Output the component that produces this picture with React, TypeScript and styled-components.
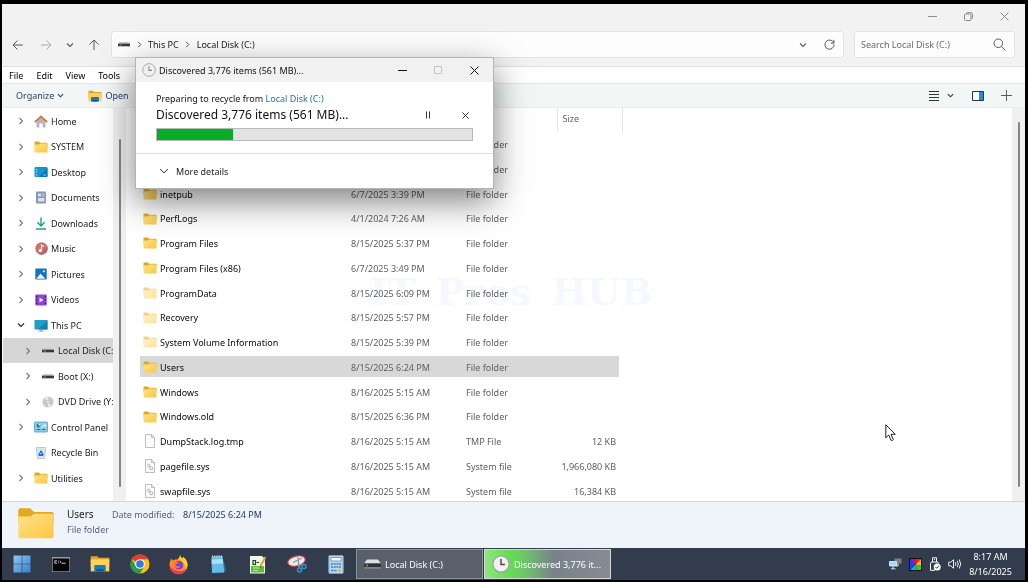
import React from "react";
import styled, { createGlobalStyle } from "styled-components";

const GlobalStyle = createGlobalStyle`
  *, *::before, *::after { box-sizing: border-box; }
  body {
    margin: 0;
    background: #000;
    font-family: "Noto Sans", "Open Sans", sans-serif;
    font-size: 9px;
    line-height: 15px;
    color: #1b1b1b;
  }
  button, input {
    font: inherit;
    color: inherit;
    background: none;
    border: 0;
    margin: 0;
    padding: 0;
    white-space: nowrap;
  }
  svg { display: block; flex: none; overflow: visible; }
`;

/* ---------- Shell ---------- */

const Desktop = styled.div`
  min-height: 100vh;
  padding: 4px 3px 2px 2px;
  display: flex;
  flex-direction: column;
  background: #000;
`;

const Explorer = styled.main`
  position: relative;
  flex: 1;
  display: flex;
  flex-direction: column;
  background: #fff;
`;

const IconButton = styled.button<{ $w?: number; $color?: string }>`
  width: ${(p) => p.$w ?? 28}px;
  height: 24px;
  flex: none;
  display: flex;
  align-items: center;
  justify-content: center;
  gap: 8px;
  color: ${(p) => p.$color ?? "#5a5a5a"};
`;

const Spacer = styled.div`
  flex: 1;
`;

/* ---------- Window chrome ---------- */

const Chrome = styled.header`
  background: #f2f2f2;
  border-bottom: 1px solid #e0e0e0;
  padding-bottom: 8px;
`;

const CaptionRow = styled.div`
  height: 27px;
  display: flex;
  justify-content: flex-end;
  padding-right: 2px;
`;

const NavRow = styled.div`
  display: flex;
  align-items: center;
  padding: 0 10px 0 2px;
`;

const AddressBar = styled.nav`
  flex: 1;
  height: 27px;
  display: flex;
  align-items: center;
  margin: 0 10px 0 3px;
  padding: 0 0 0 6px;
  background: #fdfdfd;
  border: 1px solid #e3e3e3;
  border-radius: 3px;
`;

const Crumb = styled.button`
  height: 24px;
`;

const CrumbGap = styled.span`
  width: 18px;
  display: flex;
  justify-content: center;
  color: #444;
`;

const SearchBox = styled.label`
  width: 161px;
  height: 27px;
  display: flex;
  align-items: center;
  padding: 0 8px 0 6px;
  background: #fdfdfd;
  border: 1px solid #e3e3e3;
  border-radius: 3px;
  color: #5c5c5c;
`;

const SearchInput = styled.input`
  flex: 1;
  min-width: 0;
  outline: 0;
  &::placeholder { color: #6a6a6a; opacity: 1; }
`;

const MenuBar = styled.nav`
  height: 16px;
  display: flex;
  align-items: center;
  gap: 13px;
  padding: 0 7px;
  color: #000;
`;

const CommandBar = styled.div`
  height: 25px;
  display: flex;
  align-items: center;
  padding: 0 5px 0 14px;
  background: #f3f6f7;
  border-top: 1px solid #e2e6e8;
  border-bottom: 1px solid #e9edef;
  color: #2a4168;
`;

const Command = styled.button`
  display: flex;
  align-items: center;
  gap: 3px;
  margin-right: 24px;
`;

/* ---------- Body ---------- */

const Body = styled.div`
  flex: 1 1 0;
  min-height: 0;
  display: flex;
  overflow: hidden;
`;

const Tree = styled.nav`
  width: 111px;
  flex: none;
  padding-left: 1px;
  overflow: hidden;
`;

const TreeItem = styled.button<{ $level?: number; $selected?: boolean }>`
  width: 100%;
  height: 26px;
  display: flex;
  align-items: center;
  padding-left: ${(p) => (p.$level ? 20 : 13)}px;
  background: ${(p) => (p.$selected ? "#d6d6d6" : "transparent")};
  overflow: hidden;
  &:nth-child(even) { height: 25px; }
`;

const TreeArrow = styled.span<{ $open?: boolean }>`
  width: 10px;
  flex: none;
  display: flex;
  justify-content: center;
  color: ${(p) => (p.$open ? "#222" : "#777")};
`;

const TreeIcon = styled.span`
  width: 14px;
  margin: 0 3px 0 8px;
  flex: none;
  display: flex;
  justify-content: center;
`;

const ScrollTrack = styled.div<{ $top: number }>`
  width: 13px;
  flex: none;
  display: flex;
  justify-content: center;
  padding: ${(p) => p.$top}px 0 14px;
  background: #f0f0f0;
`;

const ScrollThumb = styled.div`
  width: 2px;
  border-radius: 1px;
  background: #858585;
`;

const FilePane = styled.section`
  position: relative;
  flex: 1;
  min-width: 0;
  padding-left: 14px;
  overflow: hidden;
`;

const FileTable = styled.table`
  width: 482px;
  table-layout: fixed;
  border-collapse: collapse;
  color: #606060;
`;

const Head = styled.th<{ $w: number }>`
  width: ${(p) => p.$w}px;
  height: 24px;
  padding: 0 5px 3px;
  border-right: 1px solid #e5e5e5;
  text-align: left;
  font-weight: 400;
  color: #5a6470;
`;

const Row = styled.tr<{ $selected?: boolean }>`
  height: 25px;
  &:nth-child(4n) { height: 24px; }
  background: ${(p) =>
    p.$selected
      ? "linear-gradient(#d8d8d8, #d8d8d8) 0 1px / 479px 21px no-repeat"
      : "none"};
`;

const Cell = styled.td<{ $size?: boolean }>`
  padding: ${(p) => (p.$size ? "0 6px 1px 0" : "0 0 1px 5px")};
  text-align: ${(p) => (p.$size ? "right" : "left")};
  white-space: nowrap;
`;

const NameCell = styled.th`
  padding: 0 0 1px 3px;
  font-weight: 400;
  text-align: left;
  white-space: nowrap;
  color: #080808;
`;

const FileName = styled.span`
  display: flex;
  align-items: center;
  gap: 3px;
`;

const Watermark = styled.div`
  position: absolute;
  left: 244px;
  top: 160px;
  display: flex;
  gap: 20px;
  font-family: "DejaVu Serif", serif;
  font-size: 38px;
  font-weight: 700;
  line-height: 48px;
  color: #f7f7ff;
  mix-blend-mode: multiply;
  white-space: nowrap;
  pointer-events: none;
`;

const Details = styled.footer`
  height: 47px;
  display: flex;
  padding: 5px 15px;
  background: #eff3fa;
  border-top: 1px solid #c9d9e8;
  color: #56637a;
`;

const DetailsText = styled.div`
  display: grid;
  grid-template-columns: 45px 71px auto;
  align-content: start;
  margin-left: 12px;
  white-space: nowrap;
`;

const DetailsTitle = styled.span`
  font-size: 10px;
  color: #1b1b1b;
`;

const DetailsValue = styled.span`
  color: #243b5e;
`;

/* ---------- Progress dialog ---------- */

const Dialog = styled.section`
  position: absolute;
  left: 133px;
  top: 53px;
  width: 359px;
  background: #fff;
  border: 1px solid #b4b4b4;
  box-shadow: 0 12px 32px rgba(0, 0, 0, 0.5);
`;

const DialogTitle = styled.header`
  height: 24px;
  display: flex;
  align-items: center;
  padding-left: 6px;
  background: #f1f1f1;
  color: #111;
`;

const DialogName = styled.span`
  margin-left: 3px;
`;

const DialogBody = styled.div`
  padding: 9px 20px 12px;
  color: #111;
`;

const DialogStatus = styled.div`
  display: flex;
  align-items: center;
  gap: 21px;
  height: 18px;
  font-size: 12px;
  line-height: 18px;
`;

const DiskLink = styled.a`
  color: #2c6cb5;
  text-decoration: none;
`;

const Track = styled.div`
  height: 13px;
  margin-top: 4px;
  background: #e3e3e3;
  border: 1px solid #b9b9b9;
`;

const Fill = styled.div`
  height: 100%;
  background: #06ad25;
`;

const DialogFooter = styled.footer`
  height: 35px;
  display: flex;
  align-items: center;
  padding-left: 23px;
  border-top: 1px solid #dcdcdc;
`;

const MoreButton = styled.button`
  display: flex;
  align-items: center;
  gap: 7px;
`;

/* ---------- Taskbar ---------- */

const Taskbar = styled.nav`
  height: 32px;
  display: flex;
  align-items: center;
  background: #323c4c;
  color: #fff;
`;

const Launchers = styled.div`
  display: flex;
  width: 354px;
`;

const Launcher = styled.button`
  flex: 1;
  height: 32px;
  display: flex;
  align-items: center;
  justify-content: center;
`;

const TaskButton = styled.button<{ $busy?: boolean }>`
  width: 127px;
  height: 30px;
  margin-right: 1px;
  display: flex;
  align-items: center;
  gap: 4px;
  padding-left: 7px;
  color: #fff;
  border: 1px solid ${(p) => (p.$busy ? "#d3d8d3" : "#8b919a")};
  background: ${(p) =>
    p.$busy
      ? "linear-gradient(90deg, #8be77d 0, #66dc55 20%, #6cc968 30%, #78818a 55%, #878b94 100%)"
      : "#595f6b"};
`;

const Tray = styled.div`
  display: flex;
  align-items: center;
  gap: 7px;
  padding-right: 13px;
`;

const Clock = styled.time`
  width: 43px;
  text-align: center;
  white-space: nowrap;
`;

const Pointer = styled.svg`
  position: absolute;
  left: 883px;
  top: 420px;
`;

/* ---------- Icons ---------- */

type Dir = "right" | "down";
const Chevron = ({ dir = "right", size = 8, w = 1.1 }: { dir?: Dir; size?: number; w?: number }) => (
  <svg width={size} height={size} viewBox="0 0 8 8" fill="none" stroke="currentColor" strokeWidth={w}>
    <path d={dir === "right" ? "M2.5 1 5.5 4 2.5 7" : "M1 2.5 4 5.5 7 2.5"} />
  </svg>
);

const Arrow = ({ turn }: { turn: number }) => (
  <svg width="12" height="12" viewBox="0 0 12 12" fill="none" stroke="currentColor" strokeWidth="1">
    <path d="M11 6H1.500M5.500 1.500 1 6l4.500 4.500" transform={`rotate(${turn} 6 6)`} />
  </svg>
);

const Cross = ({ size = 9, w = 1 }: { size?: number; w?: number }) => (
  <svg width={size} height={size} viewBox="0 0 9 9" fill="none" stroke="currentColor" strokeWidth={w}>
    <path d="M.5.5l8 8M8.500.5l-8 8" />
  </svg>
);

const Minus = () => (
  <svg width="9" height="9" viewBox="0 0 9 9" stroke="currentColor"><path d="M0 4.500h9" /></svg>
);

const FolderIcon = ({ w = 14, pale = false }: { w?: number; pale?: boolean }) => (
  <svg width={w} height={(w * 12) / 14} viewBox="0 0 14 12">
    <defs>
      <linearGradient id="folderFront" x1="0" y1="0" x2="1" y2="1">
        <stop offset="0" stopColor="#ffe38f" />
        <stop offset="1" stopColor="#fcc73c" />
      </linearGradient>
    </defs>
    <g opacity={pale ? 0.5 : 1}>
      <path d="M.5 1.200Q.5.5 1.200.5h3.600l1.500 1.300h6.500q.7 0 .7.700V6H.5z" fill="#e2a921" />
      <path d="M.5 3.500h4.600l1.300-1h6.400q.7 0 .7.700v7.600q0 .7-.7.700H1.200q-.7 0-.7-.7z" fill="url(#folderFront)" />
    </g>
  </svg>
);

const OpenFolder = ({ w = 14 }: { w?: number }) => (
  <svg width={w} height={(w * 12) / 14} viewBox="0 0 14 12">
    <path d="M.5.800h4.500l1.200 1.200h7.300V8H.5z" fill="#e0a526" />
    <path d="M.5 3h13v8.500H.5z" fill="#fdd25c" />
    <path d="M3 8q0-1 1-1h6q1 0 1 1v3.500H3z" fill="#1c79bd" />
    <path d="M4.500 10h5v1.500h-5z" fill="#11517f" />
  </svg>
);

const DriveIcon = ({ w = 12 }: { w?: number }) => (
  <svg width={w} height="5" viewBox="0 0 12 5">
    <path d="M1.500 0h9L12 2H0z" fill="#c6c8ca" />
    <path d="M0 1.700h12v2.600H0z" fill="#35393b" />
    <path d="M1.500 2.600h2.500v.9H1.500z" fill="#4dbb63" />
  </svg>
);

const FileIcon = ({ gears = false }: { gears?: boolean }) => (
  <svg width="14" height="14" viewBox="0 0 14 14" fill="none">
    <path d="M2.500.5h6l3 3v10h-9z" fill="#fbfbfb" stroke="#adadad" strokeWidth=".8" />
    <path d="M8.500.5v3h3" stroke="#adadad" strokeWidth=".8" />
    {gears && (
      <g stroke="#a3a7ab" strokeWidth=".9">
        <circle cx="5.800" cy="6.500" r="1.300" />
        <circle cx="8.300" cy="9.300" r="1.500" />
      </g>
    )}
  </svg>
);

const ClockIcon = ({ size = 14, hand = "#8a8a8a" }: { size?: number; hand?: string }) => (
  <svg width={size} height={size} viewBox="0 0 14 14">
    <circle cx="7" cy="7" r="6.300" fill="#f0f0f0" stroke="#a0a0a0" strokeWidth=".9" />
    <path d="M7 3.200V7.400H10" fill="none" stroke={hand} strokeWidth="1.100" />
  </svg>
);

const HomeIcon = () => (
  <svg width="14" height="13" viewBox="0 0 14 13">
    <path d="M2.500 6 7 2l4.500 4v6.500H8.600V8.500H5.400v4H2.500z" fill="#b4b8bd" />
    <path d="M.8 7.200 7 1.300l6.200 5.900" fill="none" stroke="#d1743a" strokeWidth="1.700" />
  </svg>
);

const DesktopIcon = () => (
  <svg width="14" height="12" viewBox="0 0 14 12">
    <rect x=".5" y="1" width="13" height="10" rx="1" fill="#1795d2" />
    <path d="M13.500 2v8q0 1-1 1H5z" fill="#0b76b8" />
    <path d="M2 3h1.200v1.200H2zM2 5.500h1.200v1.200H2zM2 8.500h1.200v1H2zM9.500 8.500h2v1h-2z" fill="#a9e6fa" />
  </svg>
);

const DocumentsIcon = () => (
  <svg width="12" height="13" viewBox="0 0 12 13">
    <rect x="1" y=".5" width="10" height="12" rx="1" fill="#8299b5" />
    <path d="M3 2.500h3v3H3zM7 2.500h2.500v1H7zM7 4.500h2.500v1H7zM3 7h6.500v3.500H3z" fill="#d6e1ee" />
  </svg>
);

const DownloadsIcon = () => (
  <svg width="12" height="13" viewBox="0 0 12 13" fill="none" stroke="#1fa283" strokeWidth="1.400">
    <path d="M6 .5v8.500M2.300 5.300 6 9l3.700-3.700M1 12h10" />
  </svg>
);

const MusicIcon = () => (
  <svg width="13" height="13" viewBox="0 0 13 13">
    <circle cx="6.500" cy="6.500" r="6.200" fill="#c9716a" />
    <path d="M12.300 4.300A6.200 6.200 0 0 1 4 12.200z" fill="#a85c8c" opacity=".6" />
    <circle cx="5.300" cy="8.600" r="1.600" fill="#fff" />
    <path d="M6.500 8.600V3L9 4.400" fill="none" stroke="#fff" strokeWidth="1.100" />
  </svg>
);

const PicturesIcon = () => (
  <svg width="12" height="12" viewBox="0 0 12 12">
    <rect x=".3" y=".5" width="11.400" height="11" rx="1" fill="#1273c1" />
    <path d="M1.300 10.800 5.500 5.500l4.800 5.300z" fill="#e8f5fd" />
    <circle cx="8.800" cy="3.300" r="1.100" fill="#fff" />
  </svg>
);

const VideosIcon = () => (
  <svg width="12" height="12" viewBox="0 0 12 12">
    <rect x=".3" y=".5" width="11.400" height="11" rx="1" fill="#8a45d4" />
    <path d="M1 2h1.300v1.300H1zM1 5.300h1.300v1.300H1zM1 8.700h1.300V10H1zM9.700 2H11v1.300H9.700zM9.700 5.300H11v1.300H9.700zM9.700 8.700H11V10H9.700z" fill="#3d1473" />
    <path d="M4.500 3.500v5L8.500 6z" fill="#f3e8ff" />
  </svg>
);

const MonitorIcon = () => (
  <svg width="14" height="13" viewBox="0 0 14 13">
    <rect x=".5" y="1" width="13" height="9.500" rx=".6" fill="#1f9fc6" />
    <path d="M13.500 1.500v9H4z" fill="#1384b0" />
    <path d="M6 10.500h2v1.200h2v.8H4v-.8h2z" fill="#8ea3ae" />
  </svg>
);

const DiscIcon = () => (
  <svg width="12" height="12" viewBox="0 0 12 12">
    <circle cx="6" cy="6" r="5.600" fill="#c9c9c9" />
    <path d="M6 6 2 2a5.600 5.600 0 0 1 4-1.600zM6 6l4 4a5.600 5.600 0 0 1-4 1.600z" fill="#e6e6e6" />
    <circle cx="6" cy="6" r="1.500" fill="#fff" stroke="#a5a5a5" strokeWidth=".6" />
  </svg>
);

const ControlIcon = () => (
  <svg width="14" height="12" viewBox="0 0 14 12">
    <rect x=".5" y="1" width="13" height="10" rx=".6" fill="#8ccdea" stroke="#4e9fca" strokeWidth=".8" />
    <circle cx="4.500" cy="4.500" r="1.900" fill="#1b6eb0" />
    <path d="M4.500 4.500V2.600a1.900 1.900 0 0 1 1.900 1.900z" fill="#fff" />
    <path d="M2.500 8.500h4M8 8.500h3.500" stroke="#1b6eb0" />
    <path d="M8 6.500 9.500 4l2 1.500V3" fill="none" stroke="#fff" />
  </svg>
);

const BinIcon = () => (
  <svg width="12" height="13" viewBox="0 0 12 13">
    <path d="M1.200 1.500h9.600l-1.200 11H2.400z" fill="#dde6ec" stroke="#a8b8c4" strokeWidth=".7" />
    <path d="M4 8.500 6 5l2 3.500zM3.700 9.500h4.600" fill="none" stroke="#1c78c9" strokeWidth="1.200" />
  </svg>
);

const StartIcon = () => (
  <svg width="18" height="18" viewBox="0 0 18 18">
    <defs>
      <linearGradient id="start" x1="0" y1="0" x2="1" y2="1">
        <stop offset="0" stopColor="#8fc8f3" />
        <stop offset="1" stopColor="#3480cc" />
      </linearGradient>
    </defs>
    <path d="M.5.500h8.200v8.200H.5zM9.300.500h8.200v8.200H9.300zM.5 9.300h8.200v8.200H.5zM9.300 9.300h8.200v8.200H9.300z" fill="url(#start)" />
  </svg>
);

const TerminalIcon = () => (
  <svg width="18" height="15" viewBox="0 0 18 15">
    <rect width="18" height="15" fill="#9a9a9a" />
    <rect x=".7" y="1.500" width="16.600" height="12.800" fill="#060606" />
    <path d="M5 3.800H2.800v2.400H5M6.500 3.800v.8M6.500 5.500v.8M8 3.800l1.300 2.500M10 6.300h3.500" fill="none" stroke="#ddd" strokeWidth=".9" />
  </svg>
);

const ChromeIcon = () => (
  <svg width="20" height="20" viewBox="0 0 20 20">
    <circle cx="10" cy="10" r="9.500" fill="#fbc116" />
    <path d="M10 10 1.800 5.200A9.500 9.500 0 0 1 18.200 5.200H10z" fill="#e33b2e" />
    <path d="M1.800 5.200A9.500 9.500 0 0 0 10 19.500l4.200-7.100-8.400.2z" fill="#2a9d4a" />
    <circle cx="10" cy="10" r="4.800" fill="#fff" />
    <circle cx="10" cy="10" r="3.800" fill="#2f77e6" />
  </svg>
);

const FirefoxIcon = () => (
  <svg width="19" height="19" viewBox="0 0 19 19">
    <path d="M11 .3c1 1.200 1.500 2.300 1.700 3.500 1-.7 1.500-1.300 1.700-1.800C17 4 18.600 7 18.500 10a9 9 0 0 1-18 .3C.5 7.500 1.300 5 2.700 3.200c.1 1 .4 1.700.9 2.300 1.200-.9 2.500-1 3.900-.8C9 3.700 10.700 2.500 11 .3z" fill="#ff8a1f" />
    <path d="M11 .3c1 1.200 1.500 2.300 1.700 3.500 1-.7 1.500-1.300 1.700-1.800C17 4 18.600 7 18.500 10c-.2 2.300-1.200 4.300-2.500 5.700 1-5-1-8.700-6-11.200C10.500 3.300 11 2 11 .3z" fill="#ffd034" />
    <path d="M.5 10.300C1 15.500 5 19 9.500 19c4 0 7-2.500 8.300-5.500C14 17 5 18 .5 10.300z" fill="#f2335d" />
    <circle cx="9.800" cy="10.300" r="4.300" fill="#7a3fd0" />
    <path d="M4.500 7c2-1 4 0 5.300.8-1 1-2.500.8-3 2 .8 2 3.500 2 5 1-1 3-5.500 3.500-7 0z" fill="#ff7139" />
  </svg>
);

const NotepadIcon = () => (
  <svg width="17" height="19" viewBox="0 0 17 19">
    <path d="M12.500 3 16.500 15 13 18z" fill="#2b6f96" />
    <path d="M1.500 1.800 12.500 1l1.800 16.500L2 18z" fill="#63bde8" />
    <path d="M1.600 4.500 12.800 4l.4 4.500-11.500.5z" fill="#a8e0f8" />
    <path d="M2 1.500h10.500" stroke="#d5dadd" strokeWidth="2" strokeDasharray="1 .8" />
  </svg>
);

const NotepadPlusIcon = () => (
  <svg width="18" height="19" viewBox="0 0 18 19">
    <path d="M1 1h12l3 3v14.500H1z" fill="#f1f6ec" />
    <path d="M2 11h13v6.500H2z" fill="#5cbd3f" />
    <path d="M4 5.500h2.500v4H4zM7.500 7.500h2.500" fill="none" stroke="#23421c" strokeWidth="1.200" />
    <path d="M4 13h7M4 15.500h5" stroke="#b8eba6" />
    <path d="M16.500 2 11 12" stroke="#dba52b" strokeWidth="2" />
    <path d="m11.300 11.300-.7 2.200 1.800-1.500z" fill="#333" />
  </svg>
);

const SnipIcon = () => (
  <svg width="20" height="18" viewBox="0 0 20 18">
    <ellipse cx="9.500" cy="6" rx="9" ry="5" fill="#e9ecee" stroke="#c23a40" strokeWidth="1.200" transform="rotate(-14 9.500 6)" />
    <path d="M6 7.500 15 3M11 2l1 11M12 11l5-2" stroke="#8e969c" strokeWidth="1.300" />
    <circle cx="12.500" cy="15" r="2" fill="none" stroke="#3690d4" strokeWidth="1.500" />
    <circle cx="17" cy="11.500" r="2" fill="none" stroke="#3690d4" strokeWidth="1.500" />
  </svg>
);

const CalculatorIcon = () => (
  <svg width="16" height="19" viewBox="0 0 16 19">
    <rect x=".8" y=".5" width="14.400" height="18" rx="1" fill="#b9d8ee" stroke="#6fa4cb" />
    <path d="M2.800 2.500h10.400v3.500H2.800z" fill="#f4fbff" stroke="#5b93be" strokeWidth=".8" />
    <path d="M3 9h10M3 12h10M3 15.500h6" stroke="#3d7fb5" strokeWidth="1.700" strokeDasharray="2 .7" />
    <path d="M10.500 14.600h2.300v2h-2.300z" fill="#e8a33a" />
  </svg>
);

const BigDrive = () => (
  <svg width="17" height="10" viewBox="0 0 17 10">
    <path d="M3 .5h11L17 4.500H0z" fill="#dcdedf" />
    <path d="M0 4.500h17v4H0z" fill="#2e3234" />
    <path d="M0 8.500h17v.8H0z" fill="#b7babc" />
    <circle cx="3" cy="6.500" r=".9" fill="#52d65a" />
  </svg>
);

const NetworkIcon = () => (
  <svg width="13" height="12" viewBox="0 0 13 12">
    <path d="M5.500.5h7v5h-7z" fill="#7b8188" />
    <path d="M.5 3.500h7v4.500h-7z" fill="#9fdcf7" stroke="#e7f5fb" strokeWidth=".8" />
    <path d="M4 8v2.500M2 10.800h4.500M9 5.500v2.500H7.500" fill="none" stroke="#dfe7ec" />
  </svg>
);

const ColorIcon = () => (
  <svg width="13" height="13" viewBox="0 0 13 13">
    <rect width="13" height="13" fill="#111" />
    <path d="M1 1h5.500v5.500z" fill="#b8188f" />
    <path d="M6.500 1H12L6.500 6.500z" fill="#f2241b" />
    <path d="M12 1v7L6.500 6.500z" fill="#ffb400" />
    <path d="M12 8v4H8L6.500 6.500z" fill="#35c92c" />
    <path d="M8 12H1l5.500-5.500z" fill="#12b8b8" />
    <path d="M1 12V1l5.500 5.500z" fill="#2a3df0" />
  </svg>
);

const UsbIcon = () => (
  <svg width="12" height="14" viewBox="0 0 12 14" fill="none" stroke="#fff">
    <path d="M3.500 5V.8h4V5M5 2.500h1M6 13.300H1.500V7q0-2 1.500-2h5q1.500 0 1.500 1.500" />
    <circle cx="8.200" cy="10" r="3.500" fill="#fff" stroke="none" />
    <path d="m6.500 10 1.300 1.300L10 8.800" stroke="#323c4c" />
  </svg>
);

const SpeakerIcon = () => (
  <svg width="14" height="12" viewBox="0 0 14 12" fill="none" stroke="#fff" strokeWidth=".9">
    <path d="M.7 4.200h2L5.500 1.700v8.600L2.700 7.800h-2zM7.300 4.200q1.200 1.800 0 3.600M9.200 2.800q2.200 3.200 0 6.400M11.200 1.500q3 4.500 0 9" />
  </svg>
);

/* ---------- Data ---------- */

type Node = { label: string; icon: React.ReactNode; arrow?: Dir | "none"; level?: number; selected?: boolean };

const tree: Node[] = [
  { label: "Home", icon: <HomeIcon /> },
  { label: "SYSTEM", icon: <FolderIcon /> },
  { label: "Desktop", icon: <DesktopIcon /> },
  { label: "Documents", icon: <DocumentsIcon /> },
  { label: "Downloads", icon: <DownloadsIcon /> },
  { label: "Music", icon: <MusicIcon /> },
  { label: "Pictures", icon: <PicturesIcon /> },
  { label: "Videos", icon: <VideosIcon /> },
  { label: "This PC", icon: <MonitorIcon />, arrow: "down" },
  { label: "Local Disk (C:)", icon: <DriveIcon />, level: 1, selected: true },
  { label: "Boot (X:)", icon: <DriveIcon />, level: 1 },
  { label: "DVD Drive (Y:)", icon: <DiscIcon />, level: 1 },
  { label: "Control Panel", icon: <ControlIcon /> },
  { label: "Recycle Bin", icon: <BinIcon />, arrow: "none" },
  { label: "Utilities", icon: <FolderIcon /> },
];

type Kind = "folder" | "hidden" | "file" | "system";
type Entry = [name: string, date: string, type: string, size: string, kind: Kind];

const entries: Entry[] = [
  ["", "", "File folder", "", "folder"],
  ["", "", "File folder", "", "folder"],
  ["inetpub", "6/7/2025 3:39 PM", "File folder", "", "folder"],
  ["PerfLogs", "4/1/2024 7:26 AM", "File folder", "", "folder"],
  ["Program Files", "8/15/2025 5:37 PM", "File folder", "", "folder"],
  ["Program Files (x86)", "6/7/2025 3:49 PM", "File folder", "", "folder"],
  ["ProgramData", "8/15/2025 6:09 PM", "File folder", "", "hidden"],
  ["Recovery", "8/15/2025 5:57 PM", "File folder", "", "hidden"],
  ["System Volume Information", "8/15/2025 5:39 PM", "File folder", "", "hidden"],
  ["Users", "8/15/2025 6:24 PM", "File folder", "", "folder"],
  ["Windows", "8/16/2025 5:15 AM", "File folder", "", "folder"],
  ["Windows.old", "8/15/2025 6:36 PM", "File folder", "", "folder"],
  ["DumpStack.log.tmp", "8/16/2025 5:15 AM", "TMP File", "12 KB", "file"],
  ["pagefile.sys", "8/16/2025 5:15 AM", "System file", "1,966,080 KB", "system"],
  ["swapfile.sys", "8/16/2025 5:15 AM", "System file", "16,384 KB", "system"],
];

const launchers: [string, React.ReactNode][] = [
  ["Start", <StartIcon />],
  ["Command Prompt", <TerminalIcon />],
  ["File Explorer", <OpenFolder w={20} />],
  ["Chrome", <ChromeIcon />],
  ["Firefox", <FirefoxIcon />],
  ["Notepad", <NotepadIcon />],
  ["Notepad++", <NotepadPlusIcon />],
  ["Snipping Tool", <SnipIcon />],
  ["Calculator", <CalculatorIcon />],
];

const progress = 24;

/* ---------- Parts ---------- */

const EntryIcon = ({ kind }: { kind: Kind }) =>
  kind === "folder" || kind === "hidden" ? (
    <FolderIcon pale={kind === "hidden"} />
  ) : (
    <FileIcon gears={kind === "system"} />
  );

const ProgressDialog = () => (
  <Dialog role="dialog" aria-label="Recycle progress">
    <DialogTitle>
      <ClockIcon />
      <DialogName>Discovered 3,776 items (561 MB)...</DialogName>
      <Spacer />
      <IconButton $w={36} $color="#111" aria-label="Minimize"><Minus /></IconButton>
      <IconButton $w={36} $color="#c4c4c4" aria-label="Maximize" disabled>
        <svg width="8" height="8" viewBox="0 0 8 8" fill="none" stroke="currentColor"><path d="M.5.500h7v7h-7z" /></svg>
      </IconButton>
      <IconButton $w={37} $color="#111" aria-label="Close"><Cross /></IconButton>
    </DialogTitle>
    <DialogBody>
      <div>Preparing to recycle from <DiskLink href="#">Local Disk (C:)</DiskLink></div>
      <DialogStatus>
        Discovered 3,776 items (561 MB)...
        <Spacer />
        <IconButton $w={16} $color="#333" aria-label="Pause">
          <svg width="6" height="8" viewBox="0 0 6 8" stroke="currentColor"><path d="M1.500.5v7M4.500.5v7" /></svg>
        </IconButton>
        <IconButton $w={16} $color="#333" aria-label="Cancel"><Cross size={7} w={1.2} /></IconButton>
      </DialogStatus>
      <Track role="progressbar" aria-valuenow={progress} aria-label="Progress">
        <Fill style={{ width: `${progress}%` }} />
      </Track>
    </DialogBody>
    <DialogFooter>
      <MoreButton><Chevron dir="down" size={10} w={0.8} />More details</MoreButton>
    </DialogFooter>
  </Dialog>
);

export default function App() {
  return (
    <Desktop>
      <GlobalStyle />
      <Explorer>
        <Chrome>
          <CaptionRow>
            <IconButton $w={36} $color="#8a8a8a" aria-label="Minimize"><Minus /></IconButton>
            <IconButton $w={36} $color="#8a8a8a" aria-label="Restore">
              <svg width="9" height="9" viewBox="0 0 9 9" fill="none" stroke="currentColor">
                <rect x=".5" y="2" width="6.500" height="6.500" rx="1" />
                <path d="M2.500 2V1.500q0-1 1-1h3q2 0 2 2v3q0 1-1 1H7" />
              </svg>
            </IconButton>
            <IconButton $w={37} $color="#8a8a8a" aria-label="Close"><Cross /></IconButton>
          </CaptionRow>
          <NavRow>
            <IconButton aria-label="Back"><Arrow turn={0} /></IconButton>
            <IconButton $color="#a9a9a9" aria-label="Forward"><Arrow turn={180} /></IconButton>
            <IconButton $w={20} aria-label="Recent locations"><Chevron dir="down" /></IconButton>
            <IconButton aria-label="Up"><Arrow turn={90} /></IconButton>
            <AddressBar aria-label="Address">
              <DriveIcon />
              <CrumbGap><Chevron size={7} /></CrumbGap>
              <Crumb>This PC</Crumb>
              <CrumbGap><Chevron size={7} /></CrumbGap>
              <Crumb>Local Disk (C:)</Crumb>
              <Spacer />
              <IconButton $w={25} aria-label="Previous locations"><Chevron dir="down" /></IconButton>
              <IconButton aria-label="Refresh">
                <svg width="11" height="11" viewBox="0 0 11 11" fill="none" stroke="currentColor">
                  <path d="M9.800 4A4.600 4.600 0 1 0 10.100 5.500M10 .8v3.400H6.800" />
                </svg>
              </IconButton>
            </AddressBar>
            <SearchBox>
              <SearchInput aria-label="Search" placeholder="Search Local Disk (C:)" />
              <svg width="13" height="13" viewBox="0 0 13 13" fill="none" stroke="currentColor">
                <circle cx="5.300" cy="5.300" r="4.300" />
                <path d="m8.500 8.500 4 4" />
              </svg>
            </SearchBox>
          </NavRow>
        </Chrome>
        <MenuBar aria-label="Menu">
          <button>File</button>
          <button>Edit</button>
          <button>View</button>
          <button>Tools</button>
        </MenuBar>
        <CommandBar>
          <Command>Organize <Chevron dir="down" size={7} w={1.3} /></Command>
          <Command><OpenFolder />Open</Command>
          <Spacer />
          <IconButton $w={46} $color="#333" aria-label="View">
            <svg width="10" height="10" viewBox="0 0 10 10" stroke="currentColor">
              <path d="M0 .5h10M0 3.500h10M0 6.500h10M0 9.500h10" />
            </svg>
            <Chevron dir="down" size={7} w={1.3} />
          </IconButton>
          <IconButton aria-label="Preview pane">
            <svg width="12" height="10" viewBox="0 0 12 10">
              <path d="M.5.500h11v9H.5z" fill="#fff" stroke="#26313b" />
              <path d="M7 1h4v8H7z" fill="#1e8fdb" />
            </svg>
          </IconButton>
          <IconButton aria-label="New">
            <svg width="11" height="11" viewBox="0 0 11 11" stroke="currentColor"><path d="M0 5.500h11M5.500 0v11" /></svg>
          </IconButton>
        </CommandBar>
        <Body>
          <Tree aria-label="Folders">
            {tree.map((n) => (
              <TreeItem key={n.label} $level={n.level} $selected={n.selected}>
                <TreeArrow $open={n.arrow === "down"}>{n.arrow !== "none" && <Chevron dir={n.arrow} />}</TreeArrow>
                <TreeIcon>{n.icon}</TreeIcon>
                {n.label}
              </TreeItem>
            ))}
          </Tree>
          <ScrollTrack $top={31}><ScrollThumb /></ScrollTrack>
          <FilePane>
            <FileTable>
              <thead>
                <tr>
                  <Head $w={206} scope="col" aria-label="Name" />
                  <Head $w={115} scope="col" aria-label="Date modified" />
                  <Head $w={96} scope="col" aria-label="Type" />
                  <Head $w={65} scope="col">Size</Head>
                </tr>
              </thead>
              <tbody>
                {entries.map(([name, date, type, size, kind], i) => (
                  <Row key={i} $selected={name === "Users"}>
                    <NameCell scope="row"><FileName><EntryIcon kind={kind} />{name}</FileName></NameCell>
                    <Cell>{date}</Cell>
                    <Cell>{type}</Cell>
                    <Cell $size>{size}</Cell>
                  </Row>
                ))}
              </tbody>
            </FileTable>
            <Watermark><span>IT</span><span>Pros</span><span>HUB</span></Watermark>
          </FilePane>
          <ScrollTrack $top={14}><ScrollThumb /></ScrollTrack>
        </Body>
        <Details>
          <FolderIcon w={38} />
          <DetailsText>
            <DetailsTitle>Users</DetailsTitle>
            <span>Date modified:</span>
            <DetailsValue>8/15/2025 6:24 PM</DetailsValue>
            <span>File folder</span>
          </DetailsText>
        </Details>
        <ProgressDialog />
        <Pointer width="12" height="18" viewBox="0 0 12 18">
          <path d="M.8.800v13l3-2.800 2.200 5.300q1.500.6 2.300-.8L6 10.300h4.300z" fill="#fff" stroke="#222" />
        </Pointer>
      </Explorer>
      <Taskbar aria-label="Taskbar">
        <Launchers>
          {launchers.map(([label, icon]) => (
            <Launcher key={label} aria-label={label}>{icon}</Launcher>
          ))}
        </Launchers>
        <TaskButton><BigDrive />Local Disk (C:)</TaskButton>
        <TaskButton $busy><ClockIcon size={18} hand="#444" />Discovered 3,776 it...</TaskButton>
        <Spacer />
        <Tray>
          <NetworkIcon />
          <ColorIcon />
          <UsbIcon />
          <SpeakerIcon />
          <Clock>8:17 AM<br />8/16/2025</Clock>
        </Tray>
      </Taskbar>
    </Desktop>
  );
}
